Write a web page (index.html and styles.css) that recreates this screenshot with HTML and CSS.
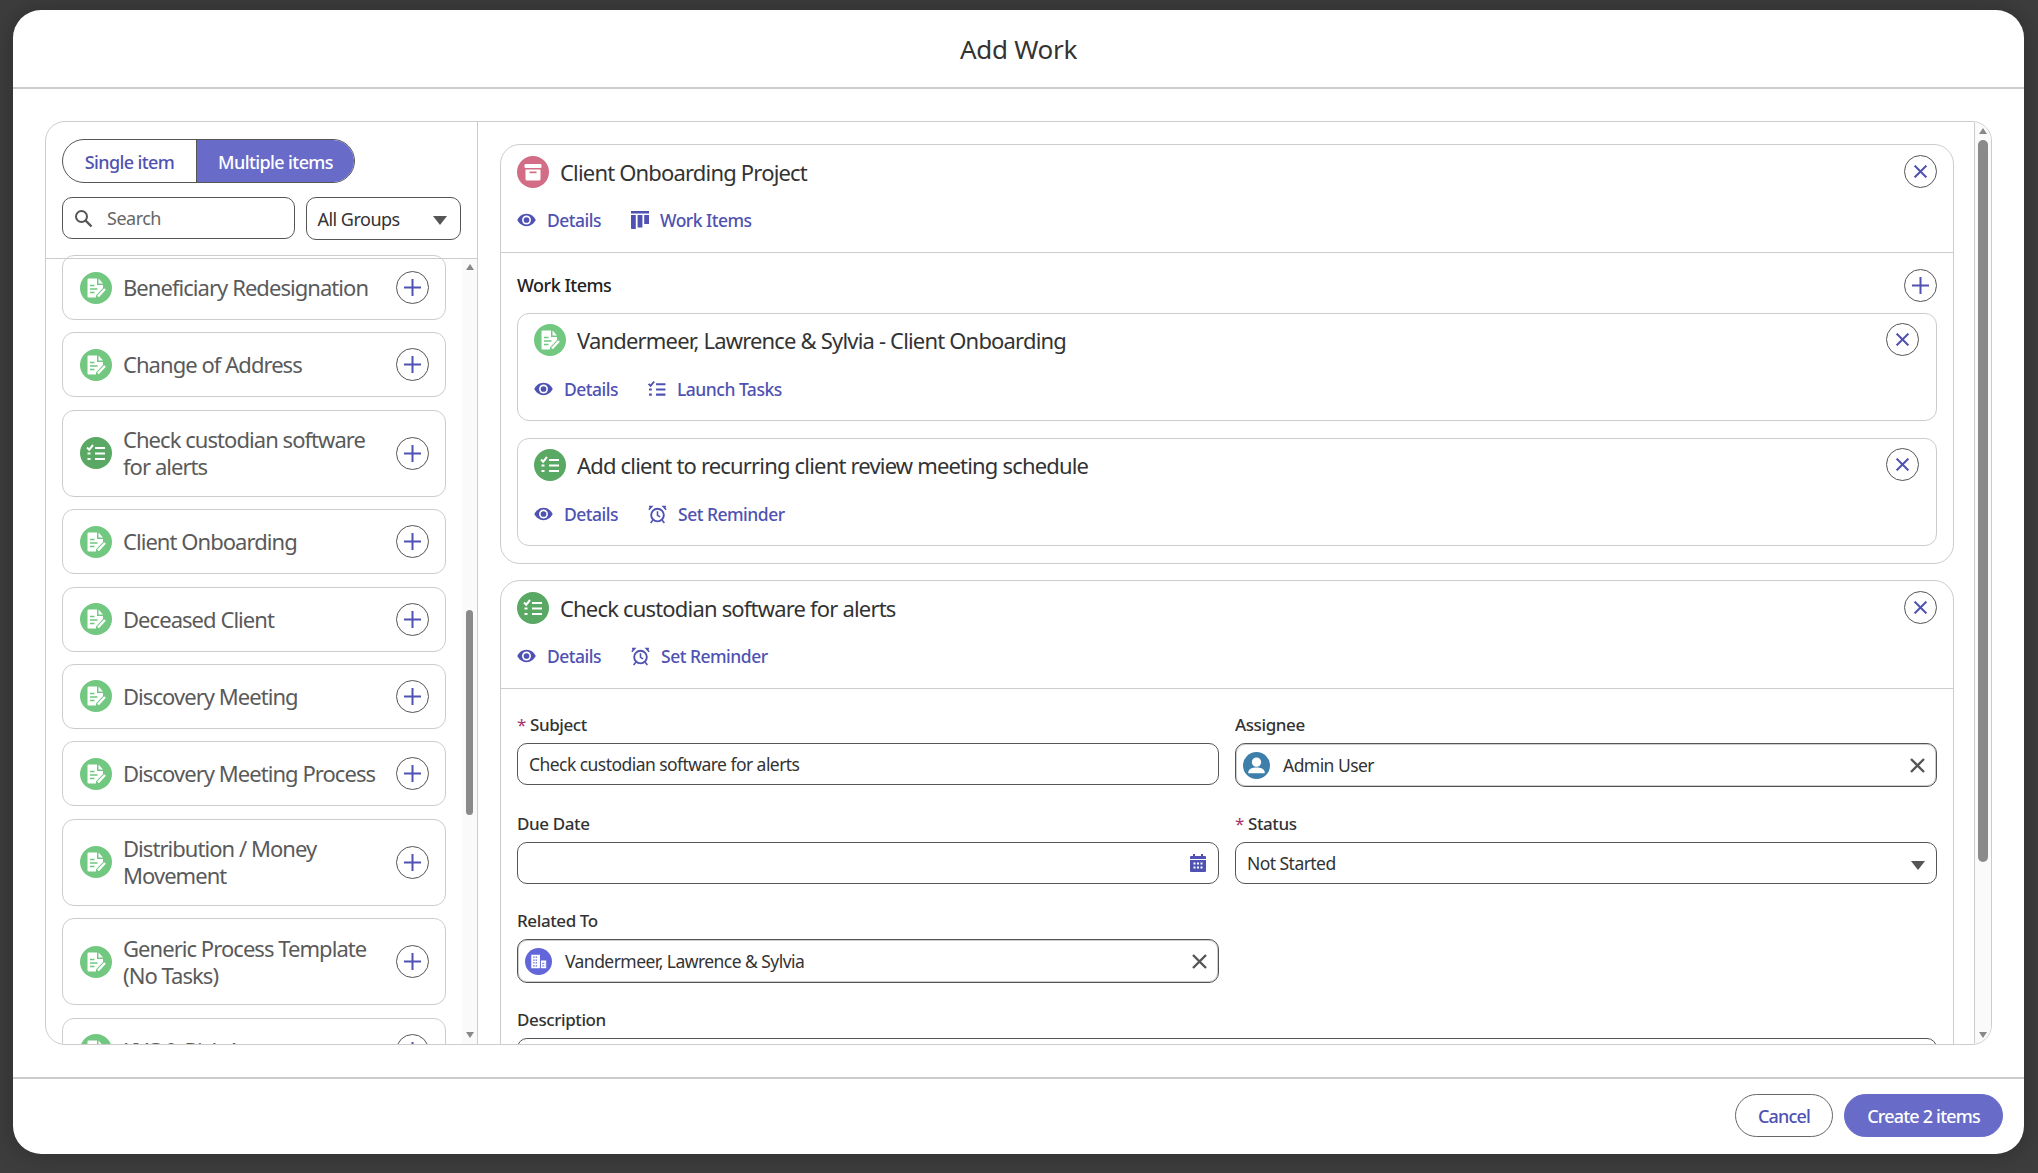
FILE: index.html
```html
<!DOCTYPE html>
<html lang="en">

<head>
    <meta charset="UTF-8">
    <title>Add Work</title>
    <link rel="stylesheet" href="styles.css">
</head>

<body>
    <svg class="defs" aria-hidden="true">
        <symbol id="i-note" viewBox="0 0 32 32">
            <path fill="#fff" d="M7.500 7.500a1 1 0 0 1 1-1H17V13H23v3l-7 7.500V25.500H8.500a1 1 0 0 1-1-1z" />
            <path fill="#fff" d="M18.500 6.500l4.500 5h-4.500z" />
            <path stroke="#72c880" stroke-width="1.700" d="M10 13.500h4.500M10 17h7.500M10 20.500h4.500" />
            <path stroke="#fff" stroke-width="2.400" d="M18 24.500l7-7.500" />
        </symbol>
        <symbol id="i-list" viewBox="0 0 32 32">
            <path fill="none" stroke="currentColor" stroke-width="2" d="M7 10.500l2.200 2.200L13 8" />
            <path stroke="currentColor" stroke-width="2.200" d="M15 11h10M15 16.500h10M15 22h10M7.500 16.500h3M7.500 22h3" />
        </symbol>
        <symbol id="i-box" viewBox="0 0 32 32">
            <rect x="7.500" y="8" width="17" height="4" rx="1" fill="#fff" />
            <path fill="#fff" d="M8.500 13.500h15V23a1.500 1.500 0 0 1-1.500 1.500H10A1.500 1.500 0 0 1 8.500 23z" />
            <rect x="12.500" y="15.500" width="7" height="1.700" fill="#d36d85" />
        </symbol>
        <symbol id="i-eye" viewBox="0 0 20 14">
            <path fill="currentColor" d="M10 .5C5.500.5 2 3.500.3 7 2 10.500 5.500 13.500 10 13.500S18 10.500 19.700 7C18 3.500 14.500.5 10 .5z" />
            <circle cx="10" cy="7" r="4.700" fill="#fff" />
            <circle cx="10" cy="7" r="3" fill="currentColor" />
        </symbol>
        <symbol id="i-cols" viewBox="0 0 18 18">
            <path fill="currentColor" d="M0 0h18v2.500H0zM0 4h4.800v14H.8a.8.8 0 0 1-.8-.8zM6.600 4h4.800v12.500H6.600zM13.200 4H18v9h-4.800z" />
        </symbol>
        <symbol id="i-alarm" viewBox="0 0 18 18">
            <circle cx="9" cy="9.500" r="6" fill="none" stroke="currentColor" stroke-width="1.800" />
            <path fill="none" stroke="currentColor" stroke-width="1.500" d="M9 6v3.800l2.500 1.500M.8 4.500L3.500 1.500H1M17.200 4.500L14.500 1.500H17M4.500 14.500l-2 2.500M13.500 14.500l2 2.500" />
        </symbol>
        <symbol id="i-cal" viewBox="0 0 16 18">
            <path fill="currentColor" d="M3 0h2v2h6V0h2v2h2a1 1 0 0 1 1 1v2H0V3a1 1 0 0 1 1-1h2zM0 6h16v11a1 1 0 0 1-1 1H1a1 1 0 0 1-1-1z" />
            <path stroke="#fff" stroke-width="2" stroke-dasharray="2 1.500" d="M3.500 9.500h9M3.500 13.500h9" />
        </symbol>
        <symbol id="i-user" viewBox="0 0 28 28">
            <circle cx="14" cy="14" r="14" fill="#3d7faa" />
            <circle cx="14" cy="10.500" r="4.800" fill="#fff" />
            <path fill="#fff" d="M5.500 20.500c1-3.500 4-4.500 8.500-4.500s7.500 1 8.500 4.500V22h-17z" />
        </symbol>
        <symbol id="i-org" viewBox="0 0 28 28">
            <circle cx="14" cy="14" r="14" fill="#6366d8" />
            <path fill="#fff" d="M6.500 7h9v14h-9zM16.500 13h5.500v8h-5.500z" />
            <path stroke="#6366d8" stroke-width="1.200" stroke-dasharray="1.500 1" d="M8.500 9.500h5M8.500 12.500h5M8.500 15.500h5M8.500 18.500h5M18 16h3M18 18.500h3" />
        </symbol>
        <symbol id="i-plus" viewBox="0 0 17 17">
            <path stroke="currentColor" stroke-width="2" d="M8.500 0v17M0 8.500h17" />
        </symbol>
        <symbol id="i-x" viewBox="0 0 15 15">
            <path stroke="currentColor" stroke-width="2.400" d="M1 1l13 13M14 1L1 14" />
        </symbol>
    </svg>

    <div class="modal">
        <div class="modal-title">Add Work</div>

        <div class="modal-body">
            <div class="panel">
                <!-- left column -->
                <div class="picker">
                    <div class="picker-top">
                        <div class="toggle">
                            <span class="toggle-btn">Single item</span>
                            <span class="toggle-btn on">Multiple items</span>
                        </div>
                        <div class="filters">
                            <div class="search">
                                <svg width="19" height="19" viewBox="0 0 19 19"><circle cx="7.500" cy="7.500" r="5.500" fill="none" stroke="#555" stroke-width="2" /><path stroke="#555" stroke-width="2.400" d="M11.500 11.500l6 6" /></svg>
                                <span>Search</span>
                            </div>
                            <div class="groups">
                                <span>All Groups</span>
                                <i class="caret"></i>
                            </div>
                        </div>
                    </div>
                    <div class="picker-list">
                        <div class="list">
                            <div class="row"><svg class="badge light"><use href="#i-note" /></svg><span class="row-name">Beneficiary Redesignation</span><span class="round"><svg><use href="#i-plus" /></svg></span></div>
                            <div class="row"><svg class="badge light"><use href="#i-note" /></svg><span class="row-name">Change of Address</span><span class="round"><svg><use href="#i-plus" /></svg></span></div>
                            <div class="row tall"><svg class="badge dark"><use href="#i-list" /></svg><span class="row-name">Check custodian software for alerts</span><span class="round"><svg><use href="#i-plus" /></svg></span></div>
                            <div class="row"><svg class="badge light"><use href="#i-note" /></svg><span class="row-name">Client Onboarding</span><span class="round"><svg><use href="#i-plus" /></svg></span></div>
                            <div class="row"><svg class="badge light"><use href="#i-note" /></svg><span class="row-name">Deceased Client</span><span class="round"><svg><use href="#i-plus" /></svg></span></div>
                            <div class="row"><svg class="badge light"><use href="#i-note" /></svg><span class="row-name">Discovery Meeting</span><span class="round"><svg><use href="#i-plus" /></svg></span></div>
                            <div class="row"><svg class="badge light"><use href="#i-note" /></svg><span class="row-name">Discovery Meeting Process</span><span class="round"><svg><use href="#i-plus" /></svg></span></div>
                            <div class="row tall"><svg class="badge light"><use href="#i-note" /></svg><span class="row-name">Distribution / Money Movement</span><span class="round"><svg><use href="#i-plus" /></svg></span></div>
                            <div class="row tall"><svg class="badge light"><use href="#i-note" /></svg><span class="row-name">Generic Process Template (No Tasks)</span><span class="round"><svg><use href="#i-plus" /></svg></span></div>
                            <div class="row"><svg class="badge light"><use href="#i-note" /></svg><span class="row-name">KYC &amp; Risk Assessment</span><span class="round"><svg><use href="#i-plus" /></svg></span></div>
                        </div>
                        <div class="vbar small">
                            <i class="arrow up"></i>
                            <div class="track"><i class="thumb"></i></div>
                            <i class="arrow down"></i>
                        </div>
                    </div>
                </div>

                <!-- right column -->
                <div class="work">
                    <div class="work-scroll">
                        <div class="card">
                            <div class="card-head">
                                <div class="head-row">
                                    <svg class="badge pink"><use href="#i-box" /></svg>
                                    <span class="head-name">Client Onboarding Project</span>
                                    <span class="round x"><svg><use href="#i-plus" /></svg></span>
                                </div>
                                <div class="links">
                                    <a class="link"><svg class="ico eye"><use href="#i-eye" /></svg>Details</a>
                                    <a class="link"><svg class="ico"><use href="#i-cols" /></svg>Work Items</a>
                                </div>
                            </div>
                            <div class="section">
                                <div class="section-head">
                                    <b>Work Items</b>
                                    <span class="round"><svg><use href="#i-plus" /></svg></span>
                                </div>
                                <div class="subcard">
                                    <div class="head-row">
                                        <svg class="badge light"><use href="#i-note" /></svg>
                                        <span class="head-name">Vandermeer, Lawrence &amp; Sylvia - Client Onboarding</span>
                                        <span class="round x"><svg><use href="#i-plus" /></svg></span>
                                    </div>
                                    <div class="links">
                                        <a class="link"><svg class="ico eye"><use href="#i-eye" /></svg>Details</a>
                                        <a class="link"><svg class="ico wide"><use href="#i-list" /></svg>Launch Tasks</a>
                                    </div>
                                </div>
                                <div class="subcard">
                                    <div class="head-row">
                                        <svg class="badge dark"><use href="#i-list" /></svg>
                                        <span class="head-name">Add client to recurring client review meeting schedule</span>
                                        <span class="round x"><svg><use href="#i-plus" /></svg></span>
                                    </div>
                                    <div class="links">
                                        <a class="link"><svg class="ico eye"><use href="#i-eye" /></svg>Details</a>
                                        <a class="link"><svg class="ico alarm"><use href="#i-alarm" /></svg>Set Reminder</a>
                                    </div>
                                </div>
                            </div>
                        </div>

                        <div class="card">
                            <div class="card-head">
                                <div class="head-row">
                                    <svg class="badge dark"><use href="#i-list" /></svg>
                                    <span class="head-name">Check custodian software for alerts</span>
                                    <span class="round x"><svg><use href="#i-plus" /></svg></span>
                                </div>
                                <div class="links">
                                    <a class="link"><svg class="ico eye"><use href="#i-eye" /></svg>Details</a>
                                    <a class="link"><svg class="ico alarm"><use href="#i-alarm" /></svg>Set Reminder</a>
                                </div>
                            </div>
                            <div class="form">
                                <div class="field">
                                    <label><em>*</em>Subject</label>
                                    <div class="input">Check custodian software for alerts</div>
                                </div>
                                <div class="field">
                                    <label>Assignee</label>
                                    <div class="input picked">
                                        <svg class="avatar"><use href="#i-user" /></svg>
                                        <span>Admin User</span>
                                        <svg class="clear"><use href="#i-x" /></svg>
                                    </div>
                                </div>
                                <div class="field">
                                    <label>Due Date</label>
                                    <div class="input">
                                        <span></span>
                                        <svg class="cal"><use href="#i-cal" /></svg>
                                    </div>
                                </div>
                                <div class="field">
                                    <label><em>*</em>Status</label>
                                    <div class="input">
                                        <span>Not Started</span>
                                        <i class="caret"></i>
                                    </div>
                                </div>
                                <div class="field">
                                    <label>Related To</label>
                                    <div class="input picked">
                                        <svg class="avatar"><use href="#i-org" /></svg>
                                        <span>Vandermeer, Lawrence &amp; Sylvia</span>
                                        <svg class="clear"><use href="#i-x" /></svg>
                                    </div>
                                </div>
                                <div class="field"></div>
                                <div class="field full">
                                    <label>Description</label>
                                    <div class="input area"></div>
                                </div>
                            </div>
                        </div>
                    </div>
                    <div class="vbar">
                        <i class="arrow up"></i>
                        <div class="track"><i class="thumb"></i></div>
                        <i class="arrow down"></i>
                    </div>
                </div>
            </div>
        </div>

        <div class="modal-foot">
            <button class="btn">Cancel</button>
            <button class="btn primary">Create 2 items</button>
        </div>
    </div>
</body>

</html>
```
FILE: styles.css
```css
* {
    box-sizing: border-box;
}

html,
body {
    height: 100%;
}

body {
    margin: 0;
    padding: 10px 14px 19px 13px;
    background: #3d3d3d;
    font-family: "Noto Sans", "Open Sans", sans-serif;
    color: #333;
    overflow: hidden;
}

.defs {
    display: none;
}

.modal {
    display: flex;
    flex-direction: column;
    height: 100%;
    background: #fff;
    border-radius: 28px;
    box-shadow: 0 0 24px rgba(0, 0, 0, 0.25);
}

.modal-title {
    height: 79px;
    padding-top: 20px;
    text-align: center;
    font-size: 26px;
    line-height: 38px;
    letter-spacing: -0.3px;
    border-bottom: 2px solid #ccc;
}

.modal-body {
    flex: 1;
    min-height: 0;
    padding: 32px 32px 32px;
}

.panel {
    display: flex;
    height: 100%;
    border: 1px solid #ccc;
    border-radius: 20px;
    overflow: hidden;
}

.modal-foot {
    display: flex;
    justify-content: flex-end;
    align-items: center;
    gap: 11px;
    height: 77px;
    padding: 0 21px 2px 0;
    border-top: 2px solid #ccc;
}

.btn {
    height: 43px;
    padding: 0 22px;
    border: 1px solid #666;
    border-radius: 22px;
    background: #fff;
    color: #4f52b2;
    font: 500 18px "Noto Sans", sans-serif;
    letter-spacing: -0.8px;
}

.btn.primary {
    border-color: #686bc7;
    background: #686bc7;
    color: #fff;
}

/* left column */

.picker {
    display: flex;
    flex-direction: column;
    width: 432px;
    border-right: 1px solid #ccc;
}

.picker-top {
    height: 137px;
    padding: 17px 16px 0;
    border-bottom: 1px solid #ccc;
}

.toggle {
    display: inline-flex;
    height: 44px;
    border: 1px solid #555;
    border-radius: 22px;
    overflow: hidden;
}

.toggle-btn {
    width: 133px;
    text-align: center;
    color: #4f52b2;
    font-size: 18px;
    font-weight: 500;
    line-height: 44px;
    letter-spacing: -0.6px;
}

.toggle-btn.on {
    width: 158px;
    background: #686bc7;
    border-left: 1px solid #555;
    color: #fff;
}

.filters {
    display: flex;
    gap: 11px;
    margin-top: 14px;
}

.search {
    display: flex;
    align-items: center;
    gap: 14px;
    width: 234px;
    height: 42px;
    padding-left: 11px;
    border: 1px solid #555;
    border-radius: 10px;
    color: #666;
    font-size: 18px;
    letter-spacing: -0.5px;
}

.groups {
    display: flex;
    align-items: center;
    justify-content: space-between;
    width: 155px;
    height: 43px;
    padding: 0 13px 0 10px;
    border: 1px solid #555;
    border-radius: 10px;
    font-size: 18px;
    letter-spacing: -0.5px;
}

.caret {
    width: 0;
    height: 0;
    margin-top: 4px;
    border: 7px solid transparent;
    border-top: 9px solid #555;
    border-bottom: 0;
}

.picker-list {
    flex: 1;
    display: flex;
    min-height: 0;
}

.list {
    flex: 1;
    display: flex;
    flex-direction: column;
    gap: 12.400px;
    min-width: 0;
    margin-top: -4px;
    padding: 0 16px;
    overflow: hidden;
}

.row {
    flex: none;
    display: flex;
    align-items: center;
    height: 65px;
    padding: 0 16px 0 17px;
    border: 1px solid #ccc;
    border-radius: 12px;
    color: #5a5a5a;
    font-size: 22px;
    line-height: 27px;
    letter-spacing: -0.95px;
}

.row.tall {
    height: 87px;
}

.row-name {
    flex: 1;
    margin-left: 11px;
}

.badge {
    flex: none;
    width: 32px;
    height: 32px;
    border-radius: 50%;
    color: #fff;
}

.badge.light {
    background: #72c880;
}

.badge.dark {
    background: #59a863;
}

.badge.pink {
    background: #d36d85;
}

.round {
    flex: none;
    display: flex;
    align-items: center;
    justify-content: center;
    width: 33px;
    height: 33px;
    border: 1px solid #555;
    border-radius: 50%;
    color: #4f52b2;
}

.round svg {
    width: 17px;
    height: 17px;
}

.round.x svg {
    transform: rotate(45deg);
}

.vbar {
    flex: none;
    display: flex;
    flex-direction: column;
    align-items: center;
    width: 16px;
    padding: 6px 0;
    background: #fafafa;
}

.vbar.small {
    width: 15px;
    padding-top: 5px;
}

.track {
    flex: 1;
    width: 100%;
    padding: 6px 3px 0;
}

.thumb {
    display: block;
    height: 722px;
    border-radius: 5px;
    background: #8a8a8a;
}

.small .track {
    padding: 0 4px;
}

.small .thumb {
    height: 205px;
    margin-top: 340px;
    width: 7px;
}

.arrow {
    width: 0;
    height: 0;
    border-left: 4px solid transparent;
    border-right: 4px solid transparent;
}

.arrow.up {
    border-bottom: 6px solid #888;
}

.arrow.down {
    border-top: 6px solid #888;
}

/* right column */

.work {
    flex: 1;
    display: flex;
    min-width: 0;
}

.work-scroll {
    flex: 1;
    min-width: 0;
    padding: 22px 20px 0 22px;
    overflow: hidden;
    border-right: 1px solid #ccc;
}

.card {
    margin-bottom: 16px;
    border: 1px solid #ccc;
    border-radius: 20px;
}

.card-head {
    height: 108px;
    padding: 10px 16px 0 16px;
    border-bottom: 1px solid #ccc;
}

.head-row {
    display: flex;
    align-items: center;
    height: 33px;
}

.head-name {
    flex: 1;
    margin-left: 11px;
    font-size: 22px;
    letter-spacing: -0.82px;
}

.links {
    display: flex;
    gap: 30px;
    height: 26px;
    margin-top: 19px;
}

.link {
    display: flex;
    align-items: center;
    gap: 11px;
    color: #4f52b2;
    font-size: 17.500px;
    font-weight: 500;
    letter-spacing: -0.5px;
}

.ico {
    width: 18px;
    height: 18px;
    flex: none;
}

.ico.eye {
    width: 19px;
    height: 14px;
}

.ico.alarm {
    width: 19px;
    height: 19px;
}

.ico.wide {
    width: 30px;
    height: 30px;
    margin: 0 -6px;
}

.section {
    padding: 0 16px 17px;
}

.section-head {
    display: flex;
    align-items: center;
    justify-content: space-between;
    height: 60px;
    padding-top: 4px;
    font-size: 18px;
    letter-spacing: -0.5px;
}

.section-head b {
    font-weight: 500;
    color: #222;
}

.subcard {
    height: 108px;
    margin-bottom: 17px;
    padding: 9px 17px 0 16px;
    border: 1px solid #ccc;
    border-radius: 12px;
}

.subcard:last-child {
    margin-bottom: 0;
}

.subcard .links {
    margin-top: 20px;
}

.form {
    display: grid;
    grid-template-columns: 1fr 1fr;
    column-gap: 16px;
    row-gap: 26px;
    padding: 25px 16px 0;
}

.field.full {
    grid-column: 1 / 3;
}

.field label {
    display: block;
    height: 22px;
    margin-bottom: 7px;
    font-size: 17px;
    font-weight: 500;
    line-height: 22px;
    letter-spacing: -0.4px;
}

.field em {
    margin-right: 4px;
    color: #a8326b;
    font-style: normal;
    font-weight: 400;
}

.input {
    display: flex;
    align-items: center;
    justify-content: space-between;
    height: 42px;
    padding: 0 11px;
    border: 1px solid #555;
    border-radius: 10px;
    font-size: 17.500px;
    letter-spacing: -0.55px;
}

.input.picked {
    height: 44px;
    padding: 0 11px 0 7px;
    box-shadow: inset 0 0 0 1px #ccc;
}

.input.picked span:first-of-type {
    flex: 1;
    margin-left: 13px;
}

.input.area {
    height: 90px;
}

.avatar {
    width: 27px;
    height: 27px;
    flex: none;
}

.cal {
    width: 16px;
    height: 18px;
    margin-right: 1px;
    color: #4f52b2;
}

.clear {
    width: 15px;
    height: 15px;
    flex: none;
    color: #555;
}
```
